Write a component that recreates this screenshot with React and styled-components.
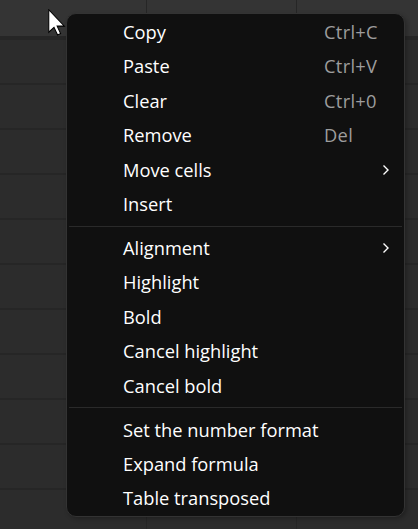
import React from "react";
import styled, { createGlobalStyle } from "styled-components";

const Global = createGlobalStyle`
  html, body { margin: 0; padding: 0; background: #2c2c2c; }
  body { width: 418px; height: 529px; overflow: hidden; font-family: "Open Sans", "Noto Sans", sans-serif; }
`;

const Stage = styled.div`
  position: relative;
  width: 418px;
  height: 529px;
  overflow: hidden;
  background: #2c2c2c;
`;

const Sheet = styled.div`
  display: flex;
  flex-direction: column;
`;

const Row = styled.div`
  display: flex;
  height: ${(p) => (p.$header ? 36 : 43)}px;
  border-bottom: ${(p) => (p.$header ? 4 : 2)}px solid #262626;
  background: ${(p) => (p.$header ? "#343434" : "#2c2c2c")};
`;

const Cell = styled.div`
  flex: 0 0 ${(p) => p.$w}px;
  border-right: 1px solid #262626;
  box-sizing: border-box;
`;

const Menu = styled.div`
  position: absolute;
  left: 66px;
  top: 13px;
  width: 339px;
  height: 504px;
  box-sizing: border-box;
  padding: 1px 0 3px;
  background: #101010;
  border: 1px solid #333333;
  border-radius: 10px;
  box-shadow: 2px 2px 4px rgba(0, 0, 0, 0.25);
  display: flex;
  flex-direction: column;
`;

const Item = styled.div`
  height: 34.4px;
  flex: 0 0 34.4px;
  display: flex;
  align-items: center;
  padding: 0 25px 0 56px;
  color: #ffffff;
  font-size: 18.3px;
  line-height: 1;
  white-space: nowrap;
`;

const Label = styled.span`
  flex: 1;
`;

const Shortcut = styled.span`
  color: #9d9d9d;
  width: 55px;
  letter-spacing: 0.3px;
`;

const Separator = styled.div`
  flex: 0 0 1px;
  margin: 4.3px 2px;
  background: #2a2a2a;
`;

const Chevron = () => (
  <svg width="10" height="12" viewBox="0 0 10 12" style={{ marginRight: -12 }}>
    <polyline points="2.5,1.5 7,6 2.5,10.5" fill="none" stroke="#ffffff" strokeWidth="1.4" />
  </svg>
);

const Cursor = styled.svg`
  position: absolute;
  left: 48px;
  top: 9px;
`;

const groups = [
  [
    { label: "Copy", sc: "Ctrl+C" },
    { label: "Paste", sc: "Ctrl+V" },
    { label: "Clear", sc: "Ctrl+0" },
    { label: "Remove", sc: "Del" },
    { label: "Move cells", sub: true },
    { label: "Insert" },
  ],
  [
    { label: "Alignment", sub: true },
    { label: "Highlight" },
    { label: "Bold" },
    { label: "Cancel highlight" },
    { label: "Cancel bold" },
  ],
  [
    { label: "Set the number format" },
    { label: "Expand formula" },
    { label: "Table transposed" },
  ],
];

const cols = [147, 150, 150];

export default function App() {
  const rows = Array.from({ length: 12 }, (_, i) => i);
  return (
    <Stage>
      <Global />
      <Sheet>
        <Row $header>
          {cols.map((w, i) => (
            <Cell key={i} $w={w} />
          ))}
        </Row>
        {rows.map((r) => (
          <Row key={r}>
            {cols.map((w, i) => (
              <Cell key={i} $w={w} />
            ))}
          </Row>
        ))}
      </Sheet>
      <Cursor width="18" height="27" viewBox="0 0 12 18">
        <path
          d="M0.5,0.5 L0.5,15.5 L4,12.2 L6.4,17.3 L8.4,16.4 L6.1,11.4 L10.9,11.4 Z"
          fill="#ffffff"
          stroke="#000000"
          strokeWidth="0.7"
          strokeLinejoin="miter"
        />
      </Cursor>
      <Menu>
        {groups.map((g, gi) => (
          <React.Fragment key={gi}>
            {gi > 0 && <Separator />}
            {g.map((it) => (
              <Item key={it.label}>
                <Label>{it.label}</Label>
                {it.sc && <Shortcut>{it.sc}</Shortcut>}
                {it.sub && <Chevron />}
              </Item>
            ))}
          </React.Fragment>
        ))}
      </Menu>
    </Stage>
  );
}
